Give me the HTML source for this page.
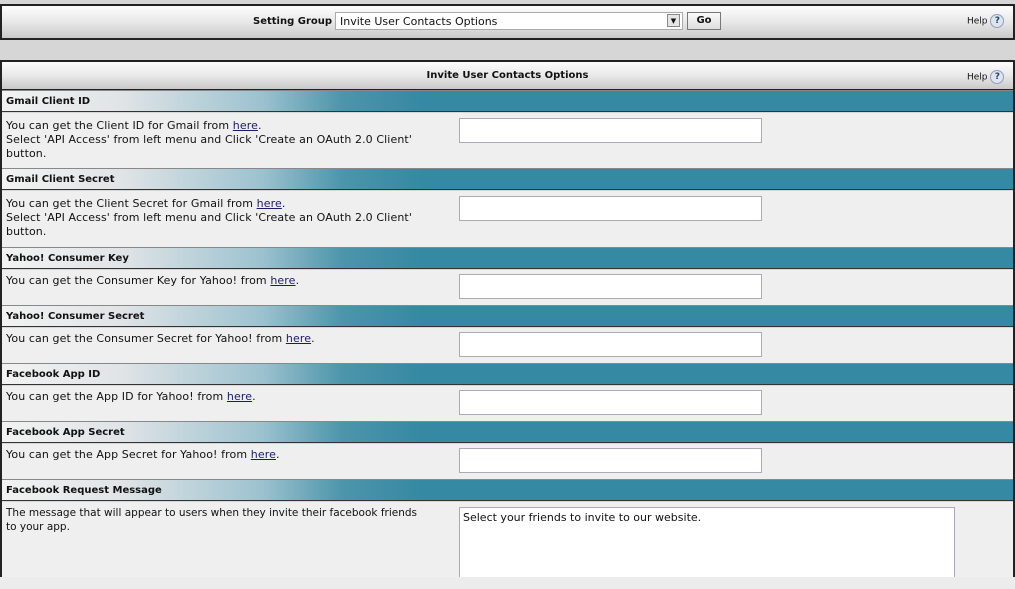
<!DOCTYPE html><html><head><style>
body{margin:0;width:1015px;height:589px;background:#d6d6d6;font-family:"DejaVu Sans","Liberation Sans",sans-serif;font-size:10px;color:#111;position:relative;overflow:hidden}
.abs{position:absolute}
.bar{background:linear-gradient(#fdfdfd,#e8e8e8 50%,#c9c9c9);}
.sh{position:absolute;left:2px;width:1011px;height:22px;background:linear-gradient(90deg,#f2f2f2 0,#e0e4e6 120px,#9cc2cf 260px,#4d95ab 340px,#3589a2 420px,#3589a2);border-top:1px solid #888;border-bottom:1px solid #333;font-weight:bold;font-size:10px;line-height:22px;padding-left:4px;box-sizing:border-box}
.ct{position:absolute;left:2px;width:1011px;background:#efefef;padding:4px 4px;box-sizing:border-box;line-height:14px;font-size:11px;letter-spacing:0.1px}
.in{position:absolute;left:459px;width:303px;height:25px;background:#fff;border:1px solid #aab;box-sizing:border-box}
a{color:#1a1a6a;text-decoration:underline}
.help{position:absolute;font-size:9px}
.q{display:inline-block;width:12px;height:12px;border-radius:50%;border:1px solid #99b;background:#dde6ee;font-size:9px;font-weight:bold;text-align:center;line-height:12px;color:#246;vertical-align:middle}
</style></head><body>
<div class="abs bar" style="left:0;top:4px;width:1011px;height:32px;border:2px solid #222;"></div>
<div class="abs" style="left:253px;top:16px;font-weight:bold">Setting Group</div>
<div class="abs" style="left:335px;top:12px;width:348px;height:18px;background:#fff;border:1px solid #aaa;box-sizing:border-box;padding:2px 4px;line-height:13px;font-size:11px">Invite User Contacts Options</div>
<div class="abs" style="left:667px;top:14px;width:13px;height:13px;background:#e6e6e6;border:1px solid #888;box-sizing:border-box;font-size:7px;text-align:center;line-height:12px">▼</div>
<div class="abs" style="left:687px;top:12px;width:34px;height:18px;background:linear-gradient(#fafafa,#ddd);border:1px solid #777;box-sizing:border-box;text-align:center;font-weight:bold;line-height:16px">Go</div>
<div class="help" style="left:967px;top:14px">Help <span class="q">?</span></div>
<div class="abs bar" style="left:0;top:60px;width:1011px;height:27px;border:2px solid #222;border-bottom:1px solid #222"></div>
<div class="abs" style="left:0;top:89px;width:2px;height:500px;background:#222"></div>
<div class="abs" style="left:1013px;top:89px;width:2px;height:500px;background:#222"></div>
<div class="abs" style="left:0;top:70px;width:1015px;text-align:center;font-weight:bold">Invite User Contacts Options</div>
<div class="help" style="left:967px;top:70px">Help <span class="q">?</span></div>

<div class="sh" style="top:90px">Gmail Client ID</div>
<div class="ct" style="top:113px;height:55px;padding-top:6px">You can get the Client ID for Gmail from <a>here</a>.<br>Select 'API Access' from left menu and Click 'Create an OAuth 2.0 Client'<br>button.</div>
<div class="in" style="top:118px"></div>
<div class="sh" style="top:168px">Gmail Client Secret</div>
<div class="ct" style="top:191px;height:56px;padding-top:6px">You can get the Client Secret for Gmail from <a>here</a>.<br>Select 'API Access' from left menu and Click 'Create an OAuth 2.0 Client'<br>button.</div>
<div class="in" style="top:196px"></div>
<div class="sh" style="top:247px">Yahoo! Consumer Key</div>
<div class="ct" style="top:270px;height:35px">You can get the Consumer Key for Yahoo! from <a>here</a>.</div>
<div class="in" style="top:274px"></div>
<div class="sh" style="top:305px">Yahoo! Consumer Secret</div>
<div class="ct" style="top:328px;height:35px">You can get the Consumer Secret for Yahoo! from <a>here</a>.</div>
<div class="in" style="top:332px"></div>
<div class="sh" style="top:363px">Facebook App ID</div>
<div class="ct" style="top:386px;height:35px">You can get the App ID for Yahoo! from <a>here</a>.</div>
<div class="in" style="top:390px"></div>
<div class="sh" style="top:421px">Facebook App Secret</div>
<div class="ct" style="top:444px;height:35px">You can get the App Secret for Yahoo! from <a>here</a>.</div>
<div class="in" style="top:448px"></div>
<div class="sh" style="top:479px">Facebook Request Message</div>
<div class="ct" style="top:502px;height:80px;font-size:10.5px;letter-spacing:0">The message that will appear to users when they invite their facebook friends<br>to your app.</div>
<div class="abs" style="left:459px;top:507px;width:496px;height:80px;background:#fff;border:1px solid #aab;box-sizing:border-box;padding:3px;line-height:13px;font-size:11px">Select your friends to invite to our website.</div>
<div class="abs" style="left:0;top:577px;width:1015px;height:12px;background:#ececec"></div>
</body></html>
